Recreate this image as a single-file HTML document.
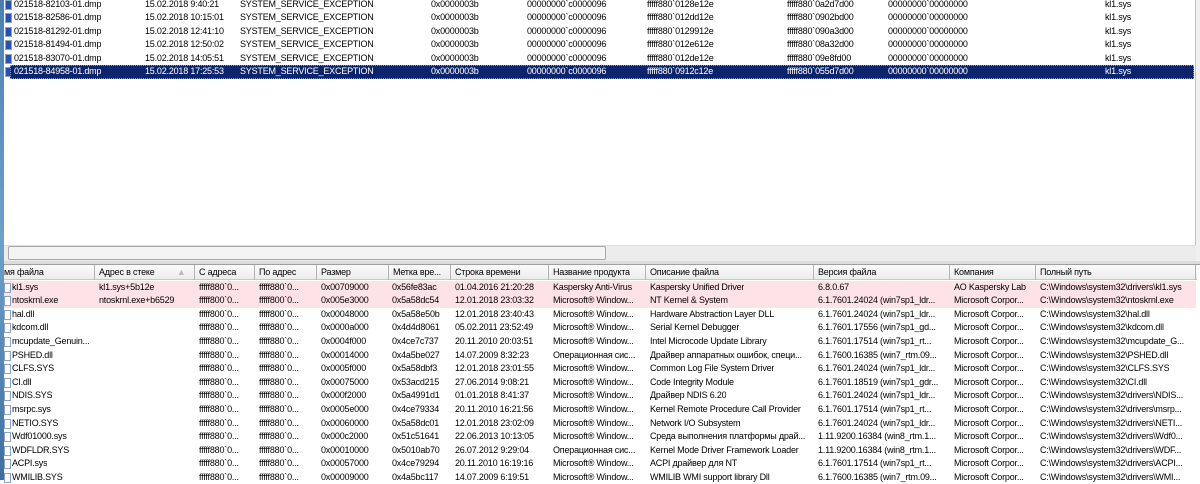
<!DOCTYPE html>
<html><head><meta charset="utf-8">
<style>
*{margin:0;padding:0;box-sizing:border-box}
body{width:1200px;height:480px;overflow:hidden;background:#fff;font-family:"Liberation Sans","DejaVu Sans",sans-serif;font-size:9px;letter-spacing:-0.2px;color:#000;position:relative}
.strip{position:absolute;left:0;top:0;width:4px;height:480px;background:linear-gradient(#4a7fb5,#6fa0cc,#3c6ea3)}
.r{position:absolute;left:4px;right:5px;height:13.6px;white-space:nowrap;line-height:13.6px}
.r span{position:absolute;top:0;overflow:hidden;white-space:nowrap}
.sel{background:#0c246b;color:#fff}
.pk{background:#fde3e7}
.ic{position:absolute;left:1px;top:2px;width:7px;height:10px;background:#2a4fb8;border:1px solid #8aa}
.ic2{position:absolute;left:0;top:2px;width:7px;height:10px;background:#fff;border:1px solid #8aa3c8}
.sb{position:absolute;left:4px;right:4px;top:245px;height:16px;background:#ececec;border-top:1px solid #ddd}
.th{position:absolute;left:8px;width:598px;top:246px;height:14px;background:#f4f4f4;border:1px solid #a8a8a8;border-radius:2px}
.split{position:absolute;left:4px;right:0;top:261px;height:4px;background:#dcdcdc;border-bottom:1px solid #a0a0a0}
.hd{position:absolute;left:4px;right:3px;top:265px;height:15px;background:linear-gradient(#fbfbfb,#ececec);border-bottom:1px solid #c8c8c8}
.hd span{position:absolute;top:0;height:15px;line-height:15px;padding-left:4px;border-right:1px solid #b5b5b5;overflow:hidden;white-space:nowrap}
.rb{position:absolute;right:0;top:0;width:5px;height:262px;background:#f0f0f0;border-left:1px solid #c0c0c0}
</style></head><body>
<div class="strip"></div>
<div class="rb"></div>

<div class="r" style="top:-2px"><i class="ic"></i><span style="left:10px">021518-82103-01.dmp</span><span style="left:141px">15.02.2018 9:40:21</span><span style="left:236px">SYSTEM_SERVICE_EXCEPTION</span><span style="left:427px">0x0000003b</span><span style="left:523px">00000000`c0000096</span><span style="left:643px">fffff880`0128e12e</span><span style="left:783px">fffff880`0a2d7d00</span><span style="left:884px">00000000`00000000</span><span style="left:1101px">kl1.sys</span></div>
<div class="r" style="top:11.4px"><i class="ic"></i><span style="left:10px">021518-82586-01.dmp</span><span style="left:141px">15.02.2018 10:15:01</span><span style="left:236px">SYSTEM_SERVICE_EXCEPTION</span><span style="left:427px">0x0000003b</span><span style="left:523px">00000000`c0000096</span><span style="left:643px">fffff880`012dd12e</span><span style="left:783px">fffff880`0902bd00</span><span style="left:884px">00000000`00000000</span><span style="left:1101px">kl1.sys</span></div>
<div class="r" style="top:24.8px"><i class="ic"></i><span style="left:10px">021518-81292-01.dmp</span><span style="left:141px">15.02.2018 12:41:10</span><span style="left:236px">SYSTEM_SERVICE_EXCEPTION</span><span style="left:427px">0x0000003b</span><span style="left:523px">00000000`c0000096</span><span style="left:643px">fffff880`0129912e</span><span style="left:783px">fffff880`090a3d00</span><span style="left:884px">00000000`00000000</span><span style="left:1101px">kl1.sys</span></div>
<div class="r" style="top:38.2px"><i class="ic"></i><span style="left:10px">021518-81494-01.dmp</span><span style="left:141px">15.02.2018 12:50:02</span><span style="left:236px">SYSTEM_SERVICE_EXCEPTION</span><span style="left:427px">0x0000003b</span><span style="left:523px">00000000`c0000096</span><span style="left:643px">fffff880`012e612e</span><span style="left:783px">fffff880`08a32d00</span><span style="left:884px">00000000`00000000</span><span style="left:1101px">kl1.sys</span></div>
<div class="r" style="top:51.6px"><i class="ic"></i><span style="left:10px">021518-83070-01.dmp</span><span style="left:141px">15.02.2018 14:05:51</span><span style="left:236px">SYSTEM_SERVICE_EXCEPTION</span><span style="left:427px">0x0000003b</span><span style="left:523px">00000000`c0000096</span><span style="left:643px">fffff880`012de12e</span><span style="left:783px">fffff880`09e8fd00</span><span style="left:884px">00000000`00000000</span><span style="left:1101px">kl1.sys</span></div>
<div class="r" style="top:65px;left:4px;right:6px"><i class="ic"></i><div class="sel" style="position:absolute;left:6px;right:0;top:0;height:13.6px;border:1px dotted #8899cc"></div><span style="left:10px;color:#fff">021518-84958-01.dmp</span><span style="left:141px;color:#fff">15.02.2018 17:25:53</span><span style="left:236px;color:#fff">SYSTEM_SERVICE_EXCEPTION</span><span style="left:427px;color:#fff">0x0000003b</span><span style="left:523px;color:#fff">00000000`c0000096</span><span style="left:643px;color:#fff">fffff880`0912c12e</span><span style="left:783px;color:#fff">fffff880`055d7d00</span><span style="left:884px;color:#fff">00000000`00000000</span><span style="left:1101px;color:#fff">kl1.sys</span></div>

<div class="sb"></div><div class="th"></div>
<div class="split"></div>

<div class="hd">
<span style="left:-4px;width:95px">мя файла</span><span style="left:91px;width:100px">Адрес в стеке <b style="color:#bbb;font-weight:normal;margin-left:20px">▲</b></span><span style="left:191px;width:60px">С адреса</span><span style="left:251px;width:62px">По адрес</span><span style="left:313px;width:72px">Размер</span><span style="left:385px;width:62px">Метка вре...</span><span style="left:447px;width:98px">Строка времени</span><span style="left:545px;width:97px">Название продукта</span><span style="left:642px;width:168px">Описание файла</span><span style="left:810px;width:136px">Версия файла</span><span style="left:946px;width:86px">Компания</span><span style="left:1032px;width:160px">Полный путь</span>
</div>

<div class="r pk" style="top:280.5px;left:4px;right:4px"><i class="ic2"></i><span style="left:8px;width:85px">kl1.sys</span><span style="left:95px;width:98px">kl1.sys+5b12e</span><span style="left:195px;width:58px">fffff880`0...</span><span style="left:255px;width:60px">fffff880`0...</span><span style="left:317px">0x00709000</span><span style="left:388px">0x56fe83ac</span><span style="left:451px">01.04.2016 21:20:28</span><span style="left:549px;width:95px">Kaspersky Anti-Virus</span><span style="left:646px">Kaspersky Unified Driver</span><span style="left:814px">6.8.0.67</span><span style="left:950px">AO Kaspersky Lab</span><span style="left:1036px">C:\Windows\system32\drivers\kl1.sys</span></div>
<div class="r pk" style="top:294.1px;left:4px;right:4px"><i class="ic2"></i><span style="left:8px;width:85px">ntoskrnl.exe</span><span style="left:95px;width:98px">ntoskrnl.exe+b6529</span><span style="left:195px;width:58px">fffff800`0...</span><span style="left:255px;width:60px">fffff800`0...</span><span style="left:317px">0x005e3000</span><span style="left:388px">0x5a58dc54</span><span style="left:451px">12.01.2018 23:03:32</span><span style="left:549px;width:95px">Microsoft® Window...</span><span style="left:646px">NT Kernel &amp; System</span><span style="left:814px">6.1.7601.24024 (win7sp1_ldr...</span><span style="left:950px">Microsoft Corpor...</span><span style="left:1036px">C:\Windows\system32\ntoskrnl.exe</span></div>
<div class="r" style="top:307.7px;left:4px;right:4px"><i class="ic2"></i><span style="left:8px">hal.dll</span><span style="left:195px">fffff800`0...</span><span style="left:255px">fffff800`0...</span><span style="left:317px">0x00048000</span><span style="left:388px">0x5a58e50b</span><span style="left:451px">12.01.2018 23:40:43</span><span style="left:549px;width:95px">Microsoft® Window...</span><span style="left:646px">Hardware Abstraction Layer DLL</span><span style="left:814px">6.1.7601.24024 (win7sp1_ldr...</span><span style="left:950px">Microsoft Corpor...</span><span style="left:1036px">C:\Windows\system32\hal.dll</span></div>
<div class="r" style="top:321.3px;left:4px;right:4px"><i class="ic2"></i><span style="left:8px">kdcom.dll</span><span style="left:195px">fffff880`0...</span><span style="left:255px">fffff880`0...</span><span style="left:317px">0x0000a000</span><span style="left:388px">0x4d4d8061</span><span style="left:451px">05.02.2011 23:52:49</span><span style="left:549px;width:95px">Microsoft® Window...</span><span style="left:646px">Serial Kernel Debugger</span><span style="left:814px">6.1.7601.17556 (win7sp1_gd...</span><span style="left:950px">Microsoft Corpor...</span><span style="left:1036px">C:\Windows\system32\kdcom.dll</span></div>
<div class="r" style="top:334.9px;left:4px;right:4px"><i class="ic2"></i><span style="left:8px;width:85px">mcupdate_Genuin...</span><span style="left:195px">fffff880`0...</span><span style="left:255px">fffff880`0...</span><span style="left:317px">0x0004f000</span><span style="left:388px">0x4ce7c737</span><span style="left:451px">20.11.2010 20:03:51</span><span style="left:549px;width:95px">Microsoft® Window...</span><span style="left:646px">Intel Microcode Update Library</span><span style="left:814px">6.1.7601.17514 (win7sp1_rt...</span><span style="left:950px">Microsoft Corpor...</span><span style="left:1036px">C:\Windows\system32\mcupdate_G...</span></div>
<div class="r" style="top:348.5px;left:4px;right:4px"><i class="ic2"></i><span style="left:8px">PSHED.dll</span><span style="left:195px">fffff880`0...</span><span style="left:255px">fffff880`0...</span><span style="left:317px">0x00014000</span><span style="left:388px">0x4a5be027</span><span style="left:451px">14.07.2009 8:32:23</span><span style="left:549px;width:95px">Операционная сис...</span><span style="left:646px;width:166px">Драйвер аппаратных ошибок, специ...</span><span style="left:814px">6.1.7600.16385 (win7_rtm.09...</span><span style="left:950px">Microsoft Corpor...</span><span style="left:1036px">C:\Windows\system32\PSHED.dll</span></div>
<div class="r" style="top:362.1px;left:4px;right:4px"><i class="ic2"></i><span style="left:8px">CLFS.SYS</span><span style="left:195px">fffff880`0...</span><span style="left:255px">fffff880`0...</span><span style="left:317px">0x0005f000</span><span style="left:388px">0x5a58dbf3</span><span style="left:451px">12.01.2018 23:01:55</span><span style="left:549px;width:95px">Microsoft® Window...</span><span style="left:646px">Common Log File System Driver</span><span style="left:814px">6.1.7601.24024 (win7sp1_ldr...</span><span style="left:950px">Microsoft Corpor...</span><span style="left:1036px">C:\Windows\system32\CLFS.SYS</span></div>
<div class="r" style="top:375.7px;left:4px;right:4px"><i class="ic2"></i><span style="left:8px">CI.dll</span><span style="left:195px">fffff880`0...</span><span style="left:255px">fffff880`0...</span><span style="left:317px">0x00075000</span><span style="left:388px">0x53acd215</span><span style="left:451px">27.06.2014 9:08:21</span><span style="left:549px;width:95px">Microsoft® Window...</span><span style="left:646px">Code Integrity Module</span><span style="left:814px">6.1.7601.18519 (win7sp1_gdr...</span><span style="left:950px">Microsoft Corpor...</span><span style="left:1036px">C:\Windows\system32\CI.dll</span></div>
<div class="r" style="top:389.3px;left:4px;right:4px"><i class="ic2"></i><span style="left:8px">NDIS.SYS</span><span style="left:195px">fffff880`0...</span><span style="left:255px">fffff880`0...</span><span style="left:317px">0x000f2000</span><span style="left:388px">0x5a4991d1</span><span style="left:451px">01.01.2018 8:41:37</span><span style="left:549px;width:95px">Microsoft® Window...</span><span style="left:646px">Драйвер NDIS 6.20</span><span style="left:814px">6.1.7601.24024 (win7sp1_ldr...</span><span style="left:950px">Microsoft Corpor...</span><span style="left:1036px">C:\Windows\system32\drivers\NDIS...</span></div>
<div class="r" style="top:402.9px;left:4px;right:4px"><i class="ic2"></i><span style="left:8px">msrpc.sys</span><span style="left:195px">fffff880`0...</span><span style="left:255px">fffff880`0...</span><span style="left:317px">0x0005e000</span><span style="left:388px">0x4ce79334</span><span style="left:451px">20.11.2010 16:21:56</span><span style="left:549px;width:95px">Microsoft® Window...</span><span style="left:646px;width:166px">Kernel Remote Procedure Call Provider</span><span style="left:814px">6.1.7601.17514 (win7sp1_rt...</span><span style="left:950px">Microsoft Corpor...</span><span style="left:1036px">C:\Windows\system32\drivers\msrp...</span></div>
<div class="r" style="top:416.5px;left:4px;right:4px"><i class="ic2"></i><span style="left:8px">NETIO.SYS</span><span style="left:195px">fffff880`0...</span><span style="left:255px">fffff880`0...</span><span style="left:317px">0x00060000</span><span style="left:388px">0x5a58dc01</span><span style="left:451px">12.01.2018 23:02:09</span><span style="left:549px;width:95px">Microsoft® Window...</span><span style="left:646px">Network I/O Subsystem</span><span style="left:814px">6.1.7601.24024 (win7sp1_ldr...</span><span style="left:950px">Microsoft Corpor...</span><span style="left:1036px">C:\Windows\system32\drivers\NETI...</span></div>
<div class="r" style="top:430.1px;left:4px;right:4px"><i class="ic2"></i><span style="left:8px">Wdf01000.sys</span><span style="left:195px">fffff880`0...</span><span style="left:255px">fffff880`0...</span><span style="left:317px">0x000c2000</span><span style="left:388px">0x51c51641</span><span style="left:451px">22.06.2013 10:13:05</span><span style="left:549px;width:95px">Microsoft® Window...</span><span style="left:646px;width:166px">Среда выполнения платформы драй...</span><span style="left:814px">1.11.9200.16384 (win8_rtm.1...</span><span style="left:950px">Microsoft Corpor...</span><span style="left:1036px">C:\Windows\system32\drivers\Wdf0...</span></div>
<div class="r" style="top:443.7px;left:4px;right:4px"><i class="ic2"></i><span style="left:8px">WDFLDR.SYS</span><span style="left:195px">fffff880`0...</span><span style="left:255px">fffff880`0...</span><span style="left:317px">0x00010000</span><span style="left:388px">0x5010ab70</span><span style="left:451px">26.07.2012 9:29:04</span><span style="left:549px;width:95px">Операционная сис...</span><span style="left:646px;width:166px">Kernel Mode Driver Framework Loader</span><span style="left:814px">1.11.9200.16384 (win8_rtm.1...</span><span style="left:950px">Microsoft Corpor...</span><span style="left:1036px">C:\Windows\system32\drivers\WDF...</span></div>
<div class="r" style="top:457.3px;left:4px;right:4px"><i class="ic2"></i><span style="left:8px">ACPI.sys</span><span style="left:195px">fffff880`0...</span><span style="left:255px">fffff880`0...</span><span style="left:317px">0x00057000</span><span style="left:388px">0x4ce79294</span><span style="left:451px">20.11.2010 16:19:16</span><span style="left:549px;width:95px">Microsoft® Window...</span><span style="left:646px">ACPI драйвер для NT</span><span style="left:814px">6.1.7601.17514 (win7sp1_rt...</span><span style="left:950px">Microsoft Corpor...</span><span style="left:1036px">C:\Windows\system32\drivers\ACPI...</span></div>
<div class="r" style="top:470.9px;left:4px;right:4px"><i class="ic2"></i><span style="left:8px">WMILIB.SYS</span><span style="left:195px">fffff880`0...</span><span style="left:255px">fffff880`0...</span><span style="left:317px">0x00009000</span><span style="left:388px">0x4a5bc117</span><span style="left:451px">14.07.2009 6:19:51</span><span style="left:549px;width:95px">Microsoft® Window...</span><span style="left:646px">WMILIB WMI support library Dll</span><span style="left:814px">6.1.7600.16385 (win7_rtm.09...</span><span style="left:950px">Microsoft Corpor...</span><span style="left:1036px">C:\Windows\system32\drivers\WMI...</span></div>
</body></html>
